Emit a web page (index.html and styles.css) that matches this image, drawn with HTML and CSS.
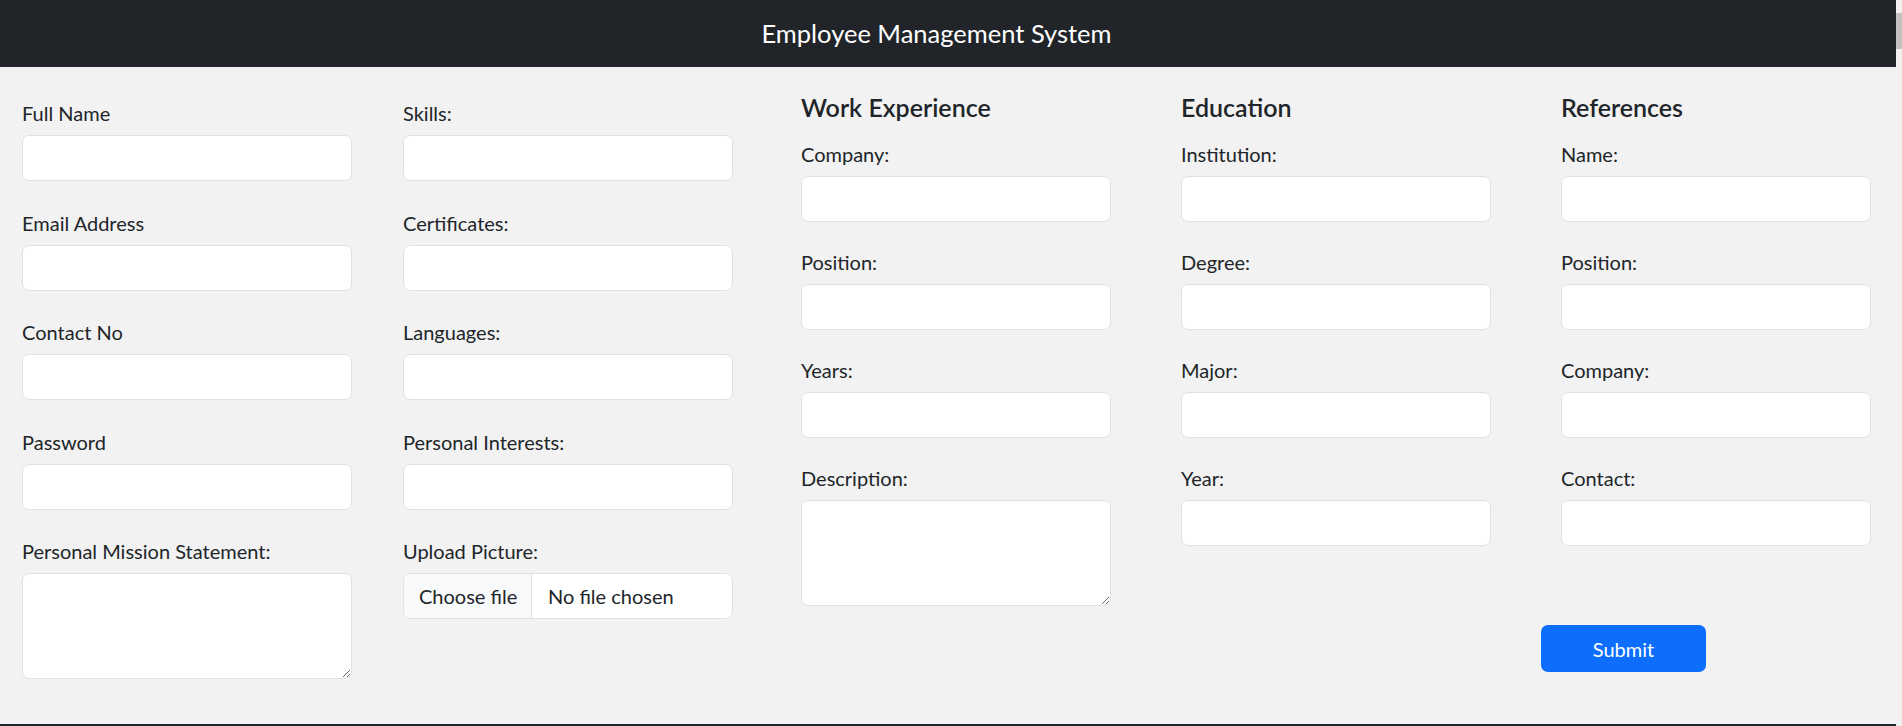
FILE: index.html
```html
<!DOCTYPE html>
<html lang="en">
<head>
<meta charset="utf-8">
<title>Employee Management System</title>
<link rel="stylesheet" href="styles.css">
</head>
<body>
<div class="screen">
  <div class="page">
    <header class="topbar">
      <h1 class="brand">Employee Management System</h1>
    </header>
    <main class="form-area">
      <div class="group group-personal">
        <div class="col col-wide">
          <div class="field field-wide"><label class="label" for="fullname">Full Name</label><input class="input" id="fullname" type="text"></div>
          <div class="field field-wide"><label class="label" for="email">Email Address</label><input class="input" id="email" type="email"></div>
          <div class="field field-wide"><label class="label" for="contact">Contact No</label><input class="input" id="contact" type="tel"></div>
          <div class="field field-wide"><label class="label" for="password">Password</label><input class="input" id="password" type="password"></div>
          <div class="field field-wide"><label class="label" for="mission">Personal Mission Statement:</label><textarea class="input textarea" id="mission"></textarea></div>
        </div>
        <div class="col col-wide">
          <div class="field field-wide"><label class="label" for="skills">Skills:</label><input class="input" id="skills" type="text"></div>
          <div class="field field-wide"><label class="label" for="certs">Certificates:</label><input class="input" id="certs" type="text"></div>
          <div class="field field-wide"><label class="label" for="langs">Languages:</label><input class="input" id="langs" type="text"></div>
          <div class="field field-wide"><label class="label" for="interests">Personal Interests:</label><input class="input" id="interests" type="text"></div>
          <div class="field field-wide"><span class="label">Upload Picture:</span>
            <div class="file-input"><span class="file-btn">Choose file</span><span class="file-name">No file chosen</span></div>
          </div>
        </div>
      </div>
      <div class="group group-history">
        <section class="col col-narrow">
          <h2 class="section-title">Work Experience</h2>
          <div class="field field-narrow"><label class="label" for="we-company">Company:</label><input class="input" id="we-company" type="text"></div>
          <div class="field field-narrow"><label class="label" for="we-position">Position:</label><input class="input" id="we-position" type="text"></div>
          <div class="field field-narrow"><label class="label" for="we-years">Years:</label><input class="input" id="we-years" type="text"></div>
          <div class="field field-narrow"><label class="label" for="we-desc">Description:</label><textarea class="input textarea" id="we-desc"></textarea></div>
        </section>
        <section class="col col-narrow">
          <h2 class="section-title">Education</h2>
          <div class="field field-narrow"><label class="label" for="ed-inst">Institution:</label><input class="input" id="ed-inst" type="text"></div>
          <div class="field field-narrow"><label class="label" for="ed-degree">Degree:</label><input class="input" id="ed-degree" type="text"></div>
          <div class="field field-narrow"><label class="label" for="ed-major">Major:</label><input class="input" id="ed-major" type="text"></div>
          <div class="field field-narrow"><label class="label" for="ed-year">Year:</label><input class="input" id="ed-year" type="text"></div>
        </section>
        <section class="col col-narrow">
          <h2 class="section-title">References</h2>
          <div class="field field-narrow"><label class="label" for="rf-name">Name:</label><input class="input" id="rf-name" type="text"></div>
          <div class="field field-narrow"><label class="label" for="rf-position">Position:</label><input class="input" id="rf-position" type="text"></div>
          <div class="field field-narrow"><label class="label" for="rf-company">Company:</label><input class="input" id="rf-company" type="text"></div>
          <div class="field field-narrow"><label class="label" for="rf-contact">Contact:</label><input class="input" id="rf-contact" type="text"></div>
          <button class="submit" type="submit">Submit</button>
        </section>
      </div>
    </main>
    <footer class="footer"></footer>
  </div>
  <div class="scrollbar"><div class="scroll-thumb"></div></div>
</div>
</body>
</html>
```

FILE: styles.css
```css
html, body {
  margin: 0;
  padding: 0;
  height: 100%;
}

body {
  font-family: Lato, "Liberation Sans", sans-serif;
  color: #212529;
  background: #f2f2f2;
}

.screen {
  display: flex;
  height: 726px;
  overflow: hidden;
}

.page {
  flex: 1;
  min-width: 0;
  display: flex;
  flex-direction: column;
}

.topbar {
  height: 67px;
  flex-shrink: 0;
  box-sizing: border-box;
  padding-right: 23px;
  background: #212529;
  display: flex;
  align-items: center;
  justify-content: center;
}

.brand {
  margin: 0;
  font-size: 25.5px;
  font-weight: 400;
  line-height: 1.2;
  color: #ffffff;
}

.form-area {
  flex: 1;
  display: flex;
  align-items: flex-start;
  gap: 68px;
  padding: 25px 0 0 22px;
}

.group {
  display: flex;
  align-items: flex-start;
}

.group-personal {
  gap: 51px;
  padding-top: 6.3px;
}

.group-history {
  gap: 70px;
}

.col-wide {
  width: 330px;
}

.col-narrow {
  width: 310px;
}

.field {
  display: flex;
  flex-direction: column;
}

.field-wide {
  margin-bottom: 26.5px;
}

.field-narrow {
  margin-bottom: 25px;
}

.label {
  font-size: 20px;
  line-height: 30px;
  margin-bottom: 7px;
}

.section-title {
  margin: 0 0 17px;
  font-size: 25px;
  font-weight: 600;
  line-height: 1.2;
}

.input {
  box-sizing: border-box;
  width: 100%;
  height: 46px;
  margin: 0;
  padding: 8px 15px;
  border: 1px solid #dee2e6;
  border-radius: 7px;
  background: #ffffff;
  font: inherit;
  font-size: 20px;
  color: #212529;
}

.textarea {
  height: 106px;
  resize: vertical;
  display: block;
}

.file-input {
  box-sizing: border-box;
  height: 46px;
  display: flex;
  align-items: stretch;
  border: 1px solid #dee2e6;
  border-radius: 7px;
  background: #ffffff;
  overflow: hidden;
  font-size: 20px;
}

.file-btn {
  width: 128px;
  box-sizing: border-box;
  padding-left: 15px;
  display: flex;
  align-items: center;
  background: #f8f9fa;
  border-right: 1px solid #dee2e6;
}

.file-name {
  display: flex;
  align-items: center;
  padding-left: 16px;
}

.submit {
  display: block;
  margin: 79.3px 0 0 -20px;
  width: 165px;
  height: 47px;
  border: none;
  border-radius: 7px;
  background: #0d6efd;
  color: #ffffff;
  font-family: inherit;
  font-size: 20px;
  cursor: pointer;
}

.footer {
  height: 2px;
  flex-shrink: 0;
  background: #212529;
}

.scrollbar {
  width: 6px;
  flex-shrink: 0;
  background: #f1f1f1;
}

.scroll-thumb {
  margin-top: 13px;
  height: 36px;
  background: #c1c1c1;
}
```
